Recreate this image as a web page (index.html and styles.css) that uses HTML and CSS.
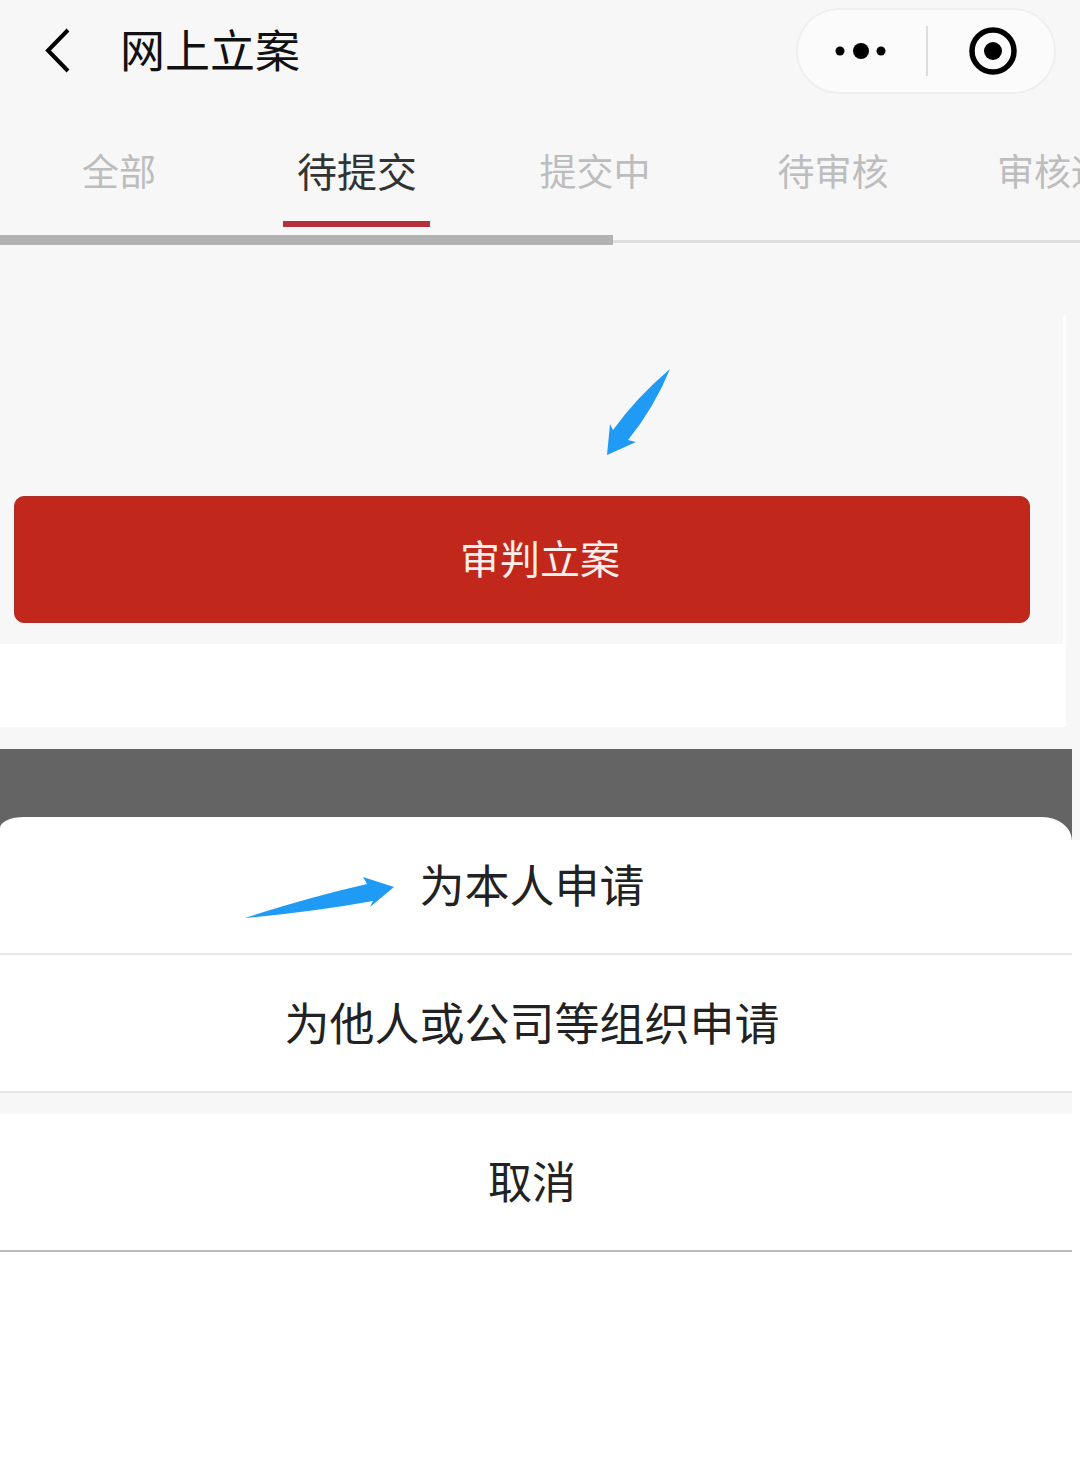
FILE: index.html
```html
<!DOCTYPE html>
<html lang="zh-CN">
<head>
    <meta charset="UTF-8">
    <meta name="viewport" content="width=device-width, initial-scale=1.0">
    <title>网上立案</title>
    <link rel="stylesheet" href="styles.css">
</head>
<body>
    <div class="page">
        <header class="nav">
            <svg class="back" width="30" height="48" viewBox="0 0 30 48">
                <path d="M25 3 L5 23.5 L25 44" fill="none" stroke="#000" stroke-width="4"/>
            </svg>
            <h1 class="title">网上立案</h1>
            <div class="capsule">
                <div class="capsule-btn">
                    <svg width="54" height="20" viewBox="0 0 54 20">
                        <circle cx="5" cy="10" r="4.5" fill="#000"/>
                        <circle cx="26" cy="10" r="8" fill="#000"/>
                        <circle cx="46" cy="10" r="4.5" fill="#000"/>
                    </svg>
                </div>
                <div class="capsule-btn">
                    <svg width="50" height="50" viewBox="0 0 50 50">
                        <circle cx="25" cy="25" r="21" fill="none" stroke="#000" stroke-width="5.5"/>
                        <circle cx="25" cy="25" r="9" fill="#000"/>
                    </svg>
                </div>
            </div>
        </header>

        <nav class="tabs">
            <div class="tab">全部</div>
            <div class="tab active">待提交</div>
            <div class="tab">提交中</div>
            <div class="tab">待审核</div>
            <div class="tab">审核通过</div>
        </nav>
        <div class="scrollbar"><div class="thumb"></div></div>

        <main class="content">
            <div class="panel">
                <button class="apply-btn">审判立案</button>
            </div>
            <div class="blank"></div>
        </main>

        <div class="mask"></div>

        <div class="sheet">
            <div class="sheet-item">为本人申请</div>
            <div class="sheet-item">为他人或公司等组织申请</div>
            <div class="sheet-gap"></div>
            <div class="sheet-item cancel">取消</div>
        </div>

        <!-- arrows drawn on top of the screenshot -->
        <svg class="mark mark-down" width="70" height="92" viewBox="0 0 70 92">
            <path d="M66 1 Q50 40 24 72 L32 74 L3 87 L6 56 L9 62 Q32 30 66 1 Z" fill="#1f9bf5"/>
        </svg>
        <svg class="mark mark-right" width="156" height="46" viewBox="0 0 156 46">
            <path d="M3 43 Q64 23 125 9 L121 2 L152 12 L128 32 L131 26 Q70 37 3 43 Z" fill="#1f9bf5"/>
        </svg>
    </div>
</body>
</html>
```

FILE: styles.css
```css
* {
    box-sizing: border-box;
}
body {
    margin: 0;
    background-color: #fff;
    font-family: "Noto Sans CJK SC", "Liberation Sans", sans-serif;
}
.page {
    position: relative;
    width: 1080px;
    height: 1457px;
    overflow: hidden;
    background: linear-gradient(#f7f7f7 840px, #fff 840px);
}
.nav {
    display: flex;
    align-items: center;
    height: 102px;
    padding: 0 24px 0 43px;
}
.back {
    flex-shrink: 0;
}
.title {
    flex: 1;
    margin: 0 0 6px 47px;
    font-size: 45px;
    font-weight: 400;
    color: #111;
}
.capsule {
    display: flex;
    width: 260px;
    height: 86px;
    background-color: #fbfbfb;
    border: 2px solid #efefef;
    border-radius: 43px;
}
.capsule-btn {
    flex: 0 0 128px;
    display: flex;
    justify-content: center;
    align-items: center;
}
.capsule-btn + .capsule-btn {
    margin: 16px 0;
    padding-left: 4px;
    border-left: 2px solid #ddd;
}
.tabs {
    display: flex;
    height: 125px;
    overflow: hidden;
    align-items: flex-start;
}
.tab {
    position: relative;
    flex: 0 0 238px;
    height: 125px;
    padding-top: 41px;
    text-align: center;
    white-space: nowrap;
    font-size: 37px;
    line-height: 54px;
    color: #bdbdbd;
}
.tab.active {
    font-size: 40px;
    color: #333;
}
.tab.active::after {
    content: "";
    position: absolute;
    left: 45px;
    bottom: 0;
    width: 147px;
    height: 6px;
    background-color: #b5303a;
}
.scrollbar {
    display: flex;
    align-items: center;
    height: 18px;
    margin-top: 4px;
    background: linear-gradient(#ddd, #ddd) 0 9px / 100% 3px no-repeat;
}
.thumb {
    width: 613px;
    height: 10px;
    background-color: #b3b3b3;
}
.content {
    width: 1066px;
    height: 478px;
    display: flex;
    flex-direction: column;
}
.panel {
    flex: 1;
    padding: 247px 36px 21px 14px;
    /* faint light seam down the right side */
    background: linear-gradient(#fefefe, #fefefe) right 66px / 3px 100% no-repeat;
}
.apply-btn {
    display: block;
    width: 100%;
    height: 127px;
    padding: 0 0 5px 36px;
    font-family: inherit;
    font-size: 40px;
    color: #fbeeea;
    background-color: #c1271a;
    border: 1px solid #a9302a;
    border-radius: 10px;
}
.blank {
    height: 83px;
    background-color: #fff;
}
.mask {
    width: 1072px;
    height: 92px;
    margin-top: 22px;
    background-color: #646464;
}
.sheet {
    width: 1072px;
    height: 640px;
    margin-top: -24px;
    position: relative;
    background-color: #fff;
    border-radius: 24px 30px 0 0 / 11px 24px 0 0;
}
.sheet-item {
    height: 138px;
    display: flex;
    justify-content: center;
    align-items: center;
    padding: 0 8px 4px 0;
    font-size: 45px;
    color: #222;
    border-bottom: 2px solid #e6e6e6;
}
.sheet-gap {
    height: 21px;
    background-color: #f7f7f7;
}
.cancel {
    font-size: 44px;
    border-bottom-color: #bbb;
}
.mark {
    position: absolute;
}
.mark-down {
    left: 604px;
    top: 368px;
}
.mark-right {
    left: 242px;
    top: 875px;
}
```
